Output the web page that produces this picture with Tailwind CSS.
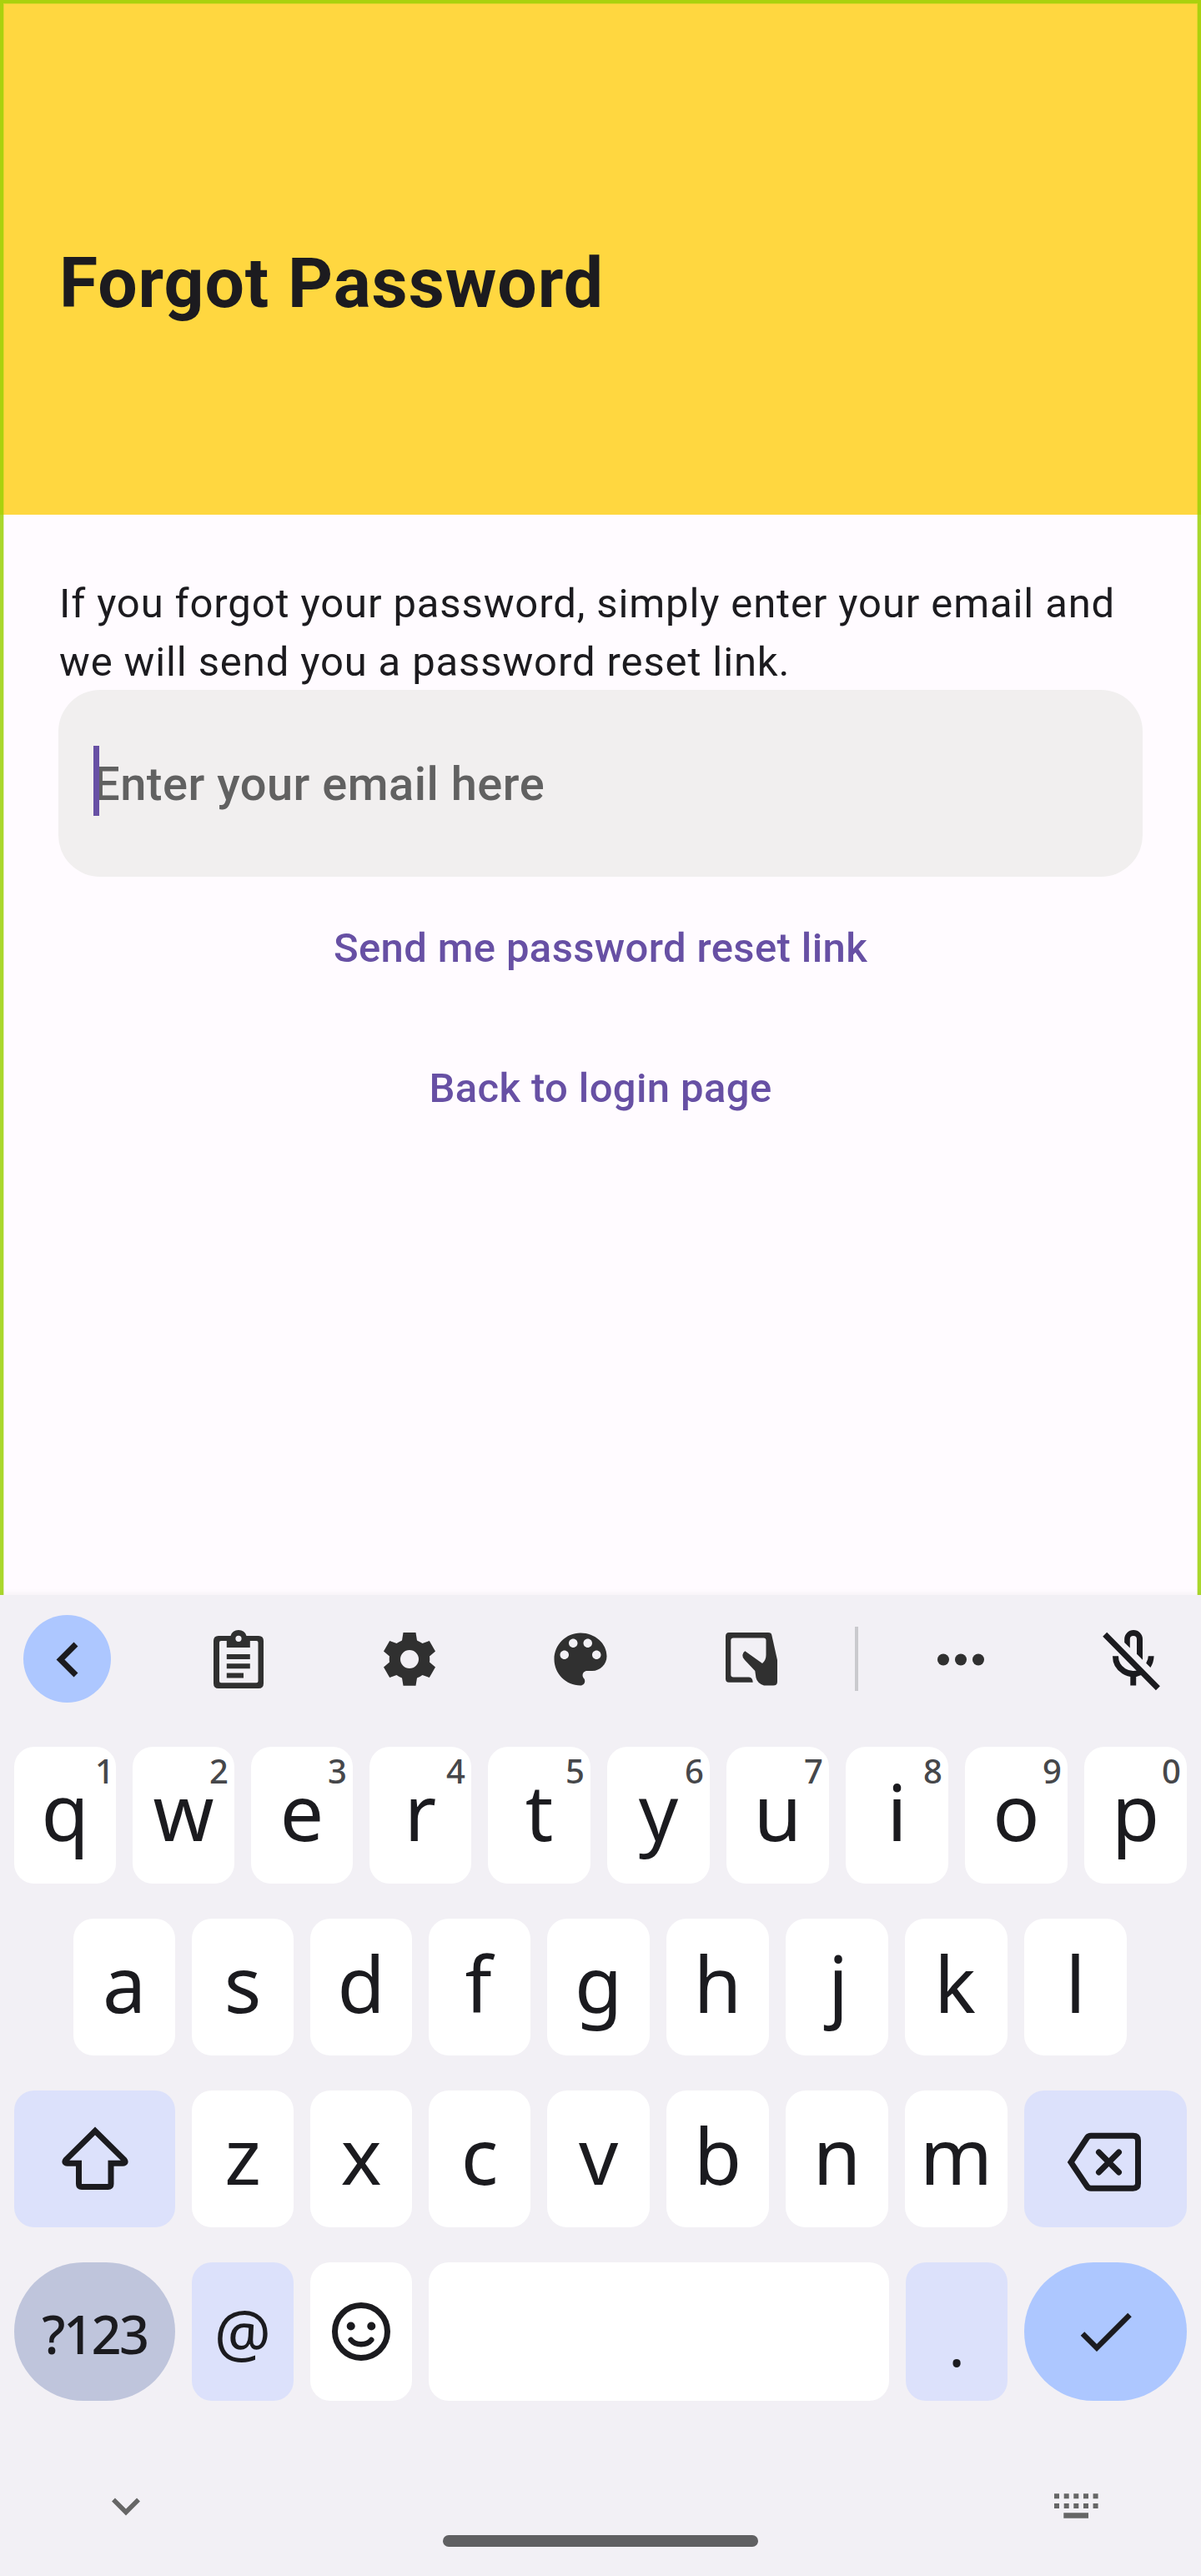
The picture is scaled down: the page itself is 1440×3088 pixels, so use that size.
<!DOCTYPE html>
<html lang="en">
<head>
<meta charset="utf-8">
<title>Forgot Password</title>
<script src="https://cdn.jsdelivr.net/npm/@tailwindcss/browser@4"></script>
</head>
<body class="bg-[#fffbff]">
<div class="relative flex h-[3088px] w-[1440px] flex-col overflow-hidden bg-[#fffbff] font-['Roboto',sans-serif] text-[#1c1b1f]">

  <header class="flex h-[617px] shrink-0 items-center bg-[#ffd740] pt-[63px] pr-[70px] pl-[71px]">
    <h1 class="text-[84px] leading-[112px] font-bold tracking-[0.95px]">Forgot Password</h1>
  </header>

  <main class="flex flex-1 flex-col px-[70px] pt-[72px]">
    <p class="-mb-[2px] pl-[1px] text-[49px] leading-[70px] tracking-[0.875px]">If you forgot your password, simply enter your email and<br>we will send you a password reset link.</p>
    <div class="relative flex h-[224px] shrink-0 items-center rounded-[50px] bg-[#f1efef] pl-[42px]">
      <span class="pt-[1px] text-[56px] leading-[84px] font-medium tracking-[0.5px] text-[#616161]">Enter your email here</span>
      <i class="absolute top-[67px] left-[42px] h-[84px] w-[7px] bg-[#6750a4]"></i>
    </div>
    <a class="flex h-[168px] items-center justify-center pt-[4px] text-[49px] font-medium tracking-[0.37px] text-[#6750a4]">Send me password reset link</a>
    <a class="flex h-[168px] items-center justify-center pt-[4px] text-[49px] font-medium tracking-[0.37px] text-[#6750a4]">Back to login page</a>
  </main>

  <!-- focus border over the app area -->
  <div class="pointer-events-none absolute inset-x-0 top-0 h-[1912px] overflow-hidden">
    <div class="h-[1930px] border-4 border-[#9acf05]/84 shadow-[inset_0_0_0_1px_rgba(154,207,5,0.3)]"></div>
  </div>

  <section class="relative h-[1176px] shrink-0 bg-[#f2f0f5] shadow-[0_0_10px_rgba(0,0,0,0.05)]">
    <!-- toolbar -->
    <div class="flex h-[153px] items-center text-[#303030]">
      <div class="ml-[28px] flex size-[105px] items-center justify-center rounded-full bg-[#adc7ff]">
        <svg class="size-[84px] text-[#1b1b1f]" viewBox="0 0 84 84" fill="none" stroke="currentColor" stroke-width="7"><path d="M52 24 33.500 42.500 52 61"/></svg>
      </div>
      <svg class="ml-[111px] size-[84px]" viewBox="0 0 84 84" fill="currentColor" fill-rule="evenodd"><path d="M18 14H32.500A10 10 0 0 1 51.500 14H66Q72 14 72 20V71Q72 77 66 77H18Q12 77 12 71V20Q12 14 18 14ZM27.800 20H21Q19 20 19 22V68.300Q19 70.300 21 70.300H63.500Q65.500 70.300 65.500 68.300V22Q65.500 20 63.500 20H55.800V28H27.800ZM42 13.700A3.600 3.600 0 1 0 42 20.900A3.600 3.600 0 1 0 42 13.700Z"/><path d="M27.800 36H55.800V42H27.800ZM27.800 47.200H55.800V53.300H27.800ZM27.800 58.400H48V64.600H27.800Z"/></svg>
      <svg class="ml-[121px] size-[84px]" viewBox="0 0 84 84" fill="currentColor" fill-rule="evenodd"><path d="M34.500 10H49.500L51 19.500Q54.500 21 57.500 23L65.800 20L73 32.500L66 38.500Q66.500 42 66 45.500L73 51.500L65.800 64L57.500 61Q54.500 63 51 64.500L49.500 73.700H34.500L33 64.500Q29.500 63 26.500 61L18.200 64L11 51.500L18 45.500Q17.500 42 18 38.500L11 32.500L18.200 20L26.500 23Q29.500 21 33 19.500ZM42 31A11 11 0 1 0 42 53A11 11 0 1 0 42 31Z"/></svg>
      <svg class="ml-[121px] size-[84px]" viewBox="0 0 24 24" fill="currentColor"><path d="M12 3c-4.970 0-9 4.030-9 9s4.030 9 9 9c.83 0 1.500-.67 1.500-1.500 0-.39-.15-.74-.39-1.010-.23-.26-.38-.61-.38-.99 0-.83.67-1.500 1.500-1.500H16c2.760 0 5-2.240 5-5 0-4.420-4.030-8-9-8zm-5.500 9c-.83 0-1.500-.67-1.500-1.500S5.670 9 6.500 9 8 9.670 8 10.500 7.330 12 6.500 12zm3-4C8.670 8 8 7.330 8 6.500S8.670 5 9.500 5s1.500.67 1.500 1.500S10.330 8 9.500 8zm5 0c-.83 0-1.500-.67-1.500-1.500S13.670 5 14.500 5s1.500.67 1.500 1.500S15.330 8 14.500 8zm3 4c-.83 0-1.500-.67-1.500-1.500S16.670 9 17.500 9s1.500.67 1.500 1.500-.67 1.500-1.500 1.500z"/></svg>
      <svg class="ml-[121px] size-[84px]" viewBox="0 0 84 84" fill="currentColor"><path d="M15 10H62Q66 10 66.300 13L73 43V69Q73 73.500 68 73.500H57Q49 71 47.400 64L46.300 56L34 43Q31 40 31.300 37Q31.500 34 34.300 32.300L55 47Q59.500 43 59.500 37V19.500Q59.500 16.500 56.500 16.500H20.300Q17.300 16.500 17.300 19.500V60.500Q17.300 63.500 20.300 63.500H39Q43.500 64 43.700 69.700H15Q11 69.700 11 65.500V14.500Q11 10 15 10Z"/></svg>
      <div class="ml-[82px] h-[77px] w-[4px] bg-[#cacace]"></div>
      <svg class="ml-[81px] size-[84px]" viewBox="0 0 84 84" fill="currentColor"><circle cx="21" cy="42.500" r="7"/><circle cx="42" cy="42.500" r="7"/><circle cx="63" cy="42.500" r="7"/></svg>
      <svg class="ml-[121px] size-[84px] text-[#1b1b1f]" viewBox="0 0 84 84" fill="currentColor"><path d="M33.200 22V18A10.900 10.900 0 0 1 55 18V42.700L48 35.700V18A4.100 4.100 0 0 0 39.800 18V28.600ZM61.800 38.300H68.600Q68.300 46 64.400 52L59.200 46.700Q61.800 42.500 61.800 38.300ZM40.300 60H47.200V73.500H40.300Z"/><path d="M22.500 38.300A21.200 21 0 0 0 53 57.300M9.700 12.300 73.400 76.700" fill="none" stroke="currentColor" stroke-width="7"/></svg>
    </div>

    <!-- keys -->
    <div class="mt-[29px] flex flex-col gap-[42px] px-[17px] font-['Noto_Sans',sans-serif] text-[93px] leading-none text-[#1b1b1f]">
      <div class="grid h-[164px] grid-cols-[repeat(4,122px)_repeat(6,123px)] gap-[20px] [&_b]:absolute [&_b]:top-[8px] [&_b]:right-[7px] [&_b]:text-[40px] [&_b]:leading-[42px] [&_b]:font-medium [&_b]:text-[#46474a]">
        <div class="relative flex items-center justify-center rounded-[24px] bg-white pb-[10px]">q<b class="translate-x-[5px]">1</b></div>
        <div class="relative flex items-center justify-center rounded-[24px] bg-white pb-[10px]">w<b>2</b></div>
        <div class="relative flex items-center justify-center rounded-[24px] bg-white pb-[10px]">e<b>3</b></div>
        <div class="relative flex items-center justify-center rounded-[24px] bg-white pb-[10px]">r<b>4</b></div>
        <div class="relative flex items-center justify-center rounded-[24px] bg-white pb-[10px]">t<b>5</b></div>
        <div class="relative flex items-center justify-center rounded-[24px] bg-white pb-[10px]">y<b>6</b></div>
        <div class="relative flex items-center justify-center rounded-[24px] bg-white pb-[10px]">u<b>7</b></div>
        <div class="relative flex items-center justify-center rounded-[24px] bg-white pb-[10px]">i<b>8</b></div>
        <div class="relative flex items-center justify-center rounded-[24px] bg-white pb-[10px]">o<b>9</b></div>
        <div class="relative flex items-center justify-center rounded-[24px] bg-white pb-[10px]">p<b>0</b></div>
      </div>
      <div class="grid h-[164px] grid-cols-[repeat(4,122px)_repeat(5,123px)] gap-[20px] px-[71px]">
        <div class="flex items-center justify-center rounded-[24px] bg-white pb-[10px]">a</div>
        <div class="flex items-center justify-center rounded-[24px] bg-white pb-[10px]">s</div>
        <div class="flex items-center justify-center rounded-[24px] bg-white pb-[10px]">d</div>
        <div class="flex items-center justify-center rounded-[24px] bg-white pr-[3px] pb-[10px]">f</div>
        <div class="flex items-center justify-center rounded-[24px] bg-white pb-[10px]">g</div>
        <div class="flex items-center justify-center rounded-[24px] bg-white pb-[10px]">h</div>
        <div class="flex items-center justify-center rounded-[24px] bg-white pb-[10px] pl-[3px]">j</div>
        <div class="flex items-center justify-center rounded-[24px] bg-white pr-[3px] pb-[10px]">k</div>
        <div class="flex items-center justify-center rounded-[24px] bg-white pb-[10px]">l</div>
      </div>
      <div class="grid h-[164px] grid-cols-[193px_repeat(3,122px)_repeat(4,123px)_195px] gap-[20px]">
        <div class="flex items-center justify-center rounded-[24px] bg-[#dce1fb]">
          <svg class="size-[84px]" viewBox="0 0 84 84" fill="none" stroke="currentColor" stroke-width="7"><path d="M42 8.500 7 43Q4 47 9 47.300H22.500V72Q22.500 75.500 26 75.500H57.500Q61 75.500 61 72V47.300H75Q80 47 77 43Z"/></svg>
        </div>
        <div class="flex items-center justify-center rounded-[24px] bg-white pb-[10px]">z</div>
        <div class="flex items-center justify-center rounded-[24px] bg-white pb-[10px]">x</div>
        <div class="flex items-center justify-center rounded-[24px] bg-white pb-[10px]">c</div>
        <div class="flex items-center justify-center rounded-[24px] bg-white pb-[10px]">v</div>
        <div class="flex items-center justify-center rounded-[24px] bg-white pb-[10px]">b</div>
        <div class="flex items-center justify-center rounded-[24px] bg-white pb-[10px]">n</div>
        <div class="flex items-center justify-center rounded-[24px] bg-white pb-[10px]">m</div>
        <div class="flex items-center justify-center rounded-[24px] bg-[#dce1fb]">
          <svg class="h-[84px] w-[96px]" viewBox="0 0 96 84" fill="none" stroke="currentColor" stroke-width="7"><path d="M6 46 25.500 16.500Q27 14.300 30 14.300H80.500Q86.500 14.300 86.500 20V71.500Q86.500 77.200 80.500 77.200H30Q27 77.200 25.500 75Z"/><path d="M39.500 34 63.500 58M63.500 34 39.500 58" stroke-linecap="round"/></svg>
        </div>
      </div>
      <div class="flex h-[166px] gap-[20px]">
        <div class="flex w-[193px] items-center justify-center rounded-[83px] bg-[#bfc5dc] pt-[4px] text-[63px] font-medium tracking-[-2.500px]">?123</div>
        <div class="flex w-[122px] items-center justify-center rounded-[24px] bg-[#dce1fb] pt-[2px] text-[76px]">@</div>
        <div class="flex w-[122px] items-center justify-center rounded-[24px] bg-white">
          <svg class="size-[84px]" viewBox="0 0 84 84" fill="none" stroke="currentColor" stroke-width="7"><circle cx="42" cy="42" r="31.500"/><circle cx="29.700" cy="35.500" r="5" fill="currentColor" stroke="none"/><circle cx="54.300" cy="35.500" r="5" fill="currentColor" stroke="none"/><path d="M29.700 52Q34 57.300 42 57.300T54.300 52" stroke-width="6.500" stroke-linecap="round"/></svg>
        </div>
        <div class="flex-1 rounded-[24px] bg-white"></div>
        <div class="flex w-[122px] items-center justify-center rounded-[24px] bg-[#dce1fb] pt-[26px] text-[75px]">.</div>
        <div class="flex w-[195px] items-center justify-center rounded-[83px] bg-[#adc7ff]">
          <svg class="size-[84px]" viewBox="0 0 84 84" fill="none" stroke="currentColor" stroke-width="6.500"><path d="M14 44.500 31 61.500 70.500 22"/></svg>
        </div>
      </div>
    </div>

    <!-- navigation bar -->
    <div class="flex h-[210px] items-start justify-between pt-[84px] pr-[108px] pl-[108px] text-[#666666]">
      <svg class="size-[84px]" viewBox="0 0 84 84" fill="none" stroke="currentColor" stroke-width="5.500"><path d="M28 34.500 43 49.500 58 34.500"/></svg>
      <div class="mt-[77px] h-[14px] w-[378px] rounded-full bg-[#606062]"></div>
      <svg class="size-[84px]" viewBox="0 0 84 84" fill="currentColor"><path d="M16 27.300h6v6h-6zM27.700 27.300h6v6h-6zM39.300 27.300h6v6h-6zM51 27.300h6v6h-6zM62.600 27.300h6v6h-6zM16 39h6v6h-6zM27.700 39h6v6h-6zM39.300 39h6v6h-6zM51 39h6v6h-6zM62.600 39h6v6h-6zM27.300 50.300h29.700v6.400H27.300z"/></svg>
    </div>
  </section>
</div>
</body>
</html>
